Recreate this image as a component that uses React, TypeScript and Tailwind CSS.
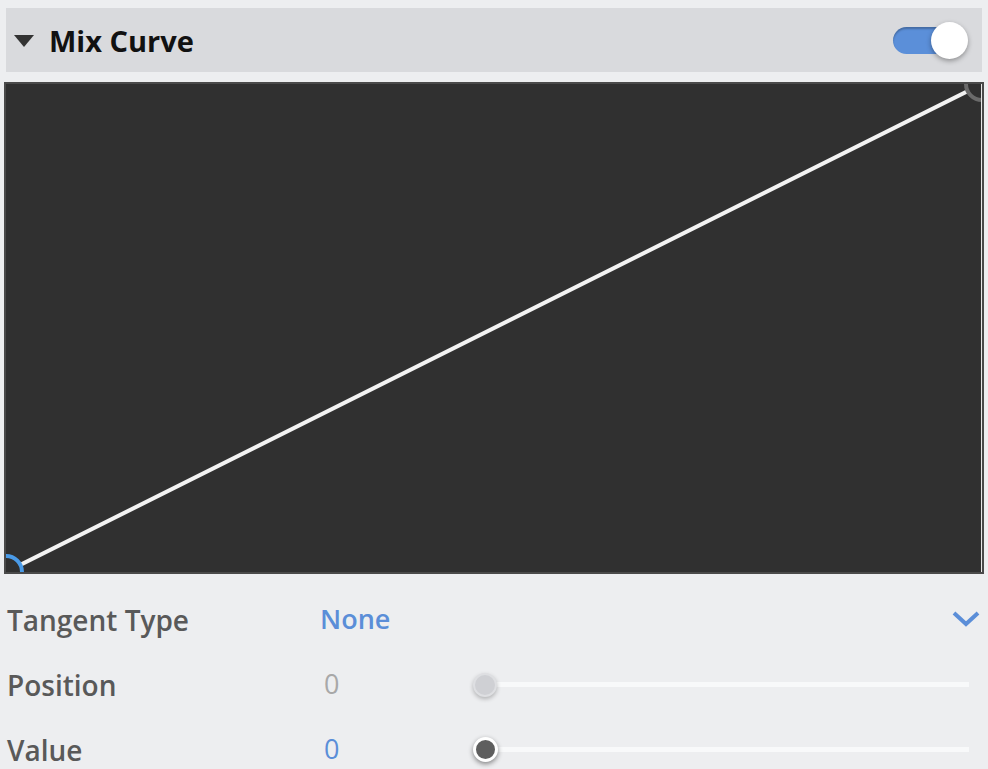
import React from "react";

export default function App() {
  return (
    <div
      className="w-[988px] h-[769px] overflow-hidden bg-[#edeef0] pt-[8px]"
      style={{ fontFamily: '"Open Sans", "Noto Sans", sans-serif' }}
    >
      {/* Header */}
      <div className="mx-[6px] h-[64px] bg-[#d9dadd] flex items-center pl-[8px] pr-[14px]">
        <svg width="20" height="14" viewBox="0 0 20 14" className="mr-[15px] mt-[2px]">
          <polygon points="0,1 20,1 10,13" fill="#333" />
        </svg>
        <span className="text-[29px] font-bold text-[#111] leading-none">Mix Curve</span>
        <div className="ml-auto relative w-[75px] h-[37px] flex items-center">
          <div className="w-[58px] h-[27px] rounded-full bg-[#5b8fd9] shadow-[inset_0_2px_2px_rgba(0,0,0,0.25)]" />
          <div className="absolute right-0 top-0 w-[37px] h-[37px] rounded-full bg-white shadow-[0_2px_5px_rgba(0,0,0,0.35)]" />
        </div>
      </div>

      {/* Curve canvas */}
      <div className="mt-[10px] mx-[4px] h-[492px] border-2 border-[#4a4a4a] bg-[#303030] relative overflow-hidden">
        <svg width="976" height="488" viewBox="0 0 976 488" className="block">
          <line x1="0" y1="488" x2="976" y2="0" stroke="#f2f2f2" strokeWidth="4" />
          <circle cx="0" cy="488" r="16" fill="#303030" stroke="#4a9be8" strokeWidth="4" />
          <circle cx="976" cy="0" r="16" fill="#303030" stroke="#6a6a6a" strokeWidth="4" />
        </svg>
        <div className="absolute right-0 top-0 bottom-0 w-px bg-[#e6e6e6]" />
      </div>

      {/* Rows */}
      <div className="mt-[13px]">
        <div className="h-[65px] flex items-center">
          <div className="w-[320px] pl-[7px] text-[28px] font-semibold text-[#595959]">Tangent Type</div>
          <div className="text-[27px] font-semibold text-[#5b8ed8]">None</div>
          <svg width="28" height="18" viewBox="0 0 28 18" className="ml-auto mr-[8px] mt-[-2px]">
            <polyline points="2,3 14,14 26,3" fill="none" stroke="#5b8ed8" strokeWidth="4" />
          </svg>
        </div>
        <div className="h-[65px] flex items-center">
          <div className="w-[320px] pl-[7px] text-[28px] font-semibold text-[#595959]">Position</div>
          <div className="w-[153px] pl-[4px] text-[27px] text-[#a8a8a8]">0</div>
          <div className="relative w-[496px] h-[24px] flex items-center">
            <div className="absolute left-[12px] right-0 h-[5px] bg-[#f8f9fa]" />
            <div className="absolute left-0 w-[24px] h-[24px] rounded-full bg-[#cfd0d4] border-2 border-[#dedfe2] shadow-[0_2px_4px_rgba(0,0,0,0.25)]" />
          </div>
        </div>
        <div className="h-[65px] flex items-center">
          <div className="w-[320px] pl-[7px] text-[28px] font-semibold text-[#595959]">Value</div>
          <div className="w-[153px] pl-[4px] text-[27px] text-[#5b8ed8]">0</div>
          <div className="relative w-[496px] h-[24px] flex items-center">
            <div className="absolute left-[12px] right-0 h-[5px] bg-[#f8f9fa]" />
            <div className="absolute left-0 w-[25px] h-[25px] rounded-full bg-[#5e5e5e] border-[3px] border-white shadow-[0_2px_5px_rgba(0,0,0,0.45)]" />
          </div>
        </div>
      </div>
    </div>
  );
}
